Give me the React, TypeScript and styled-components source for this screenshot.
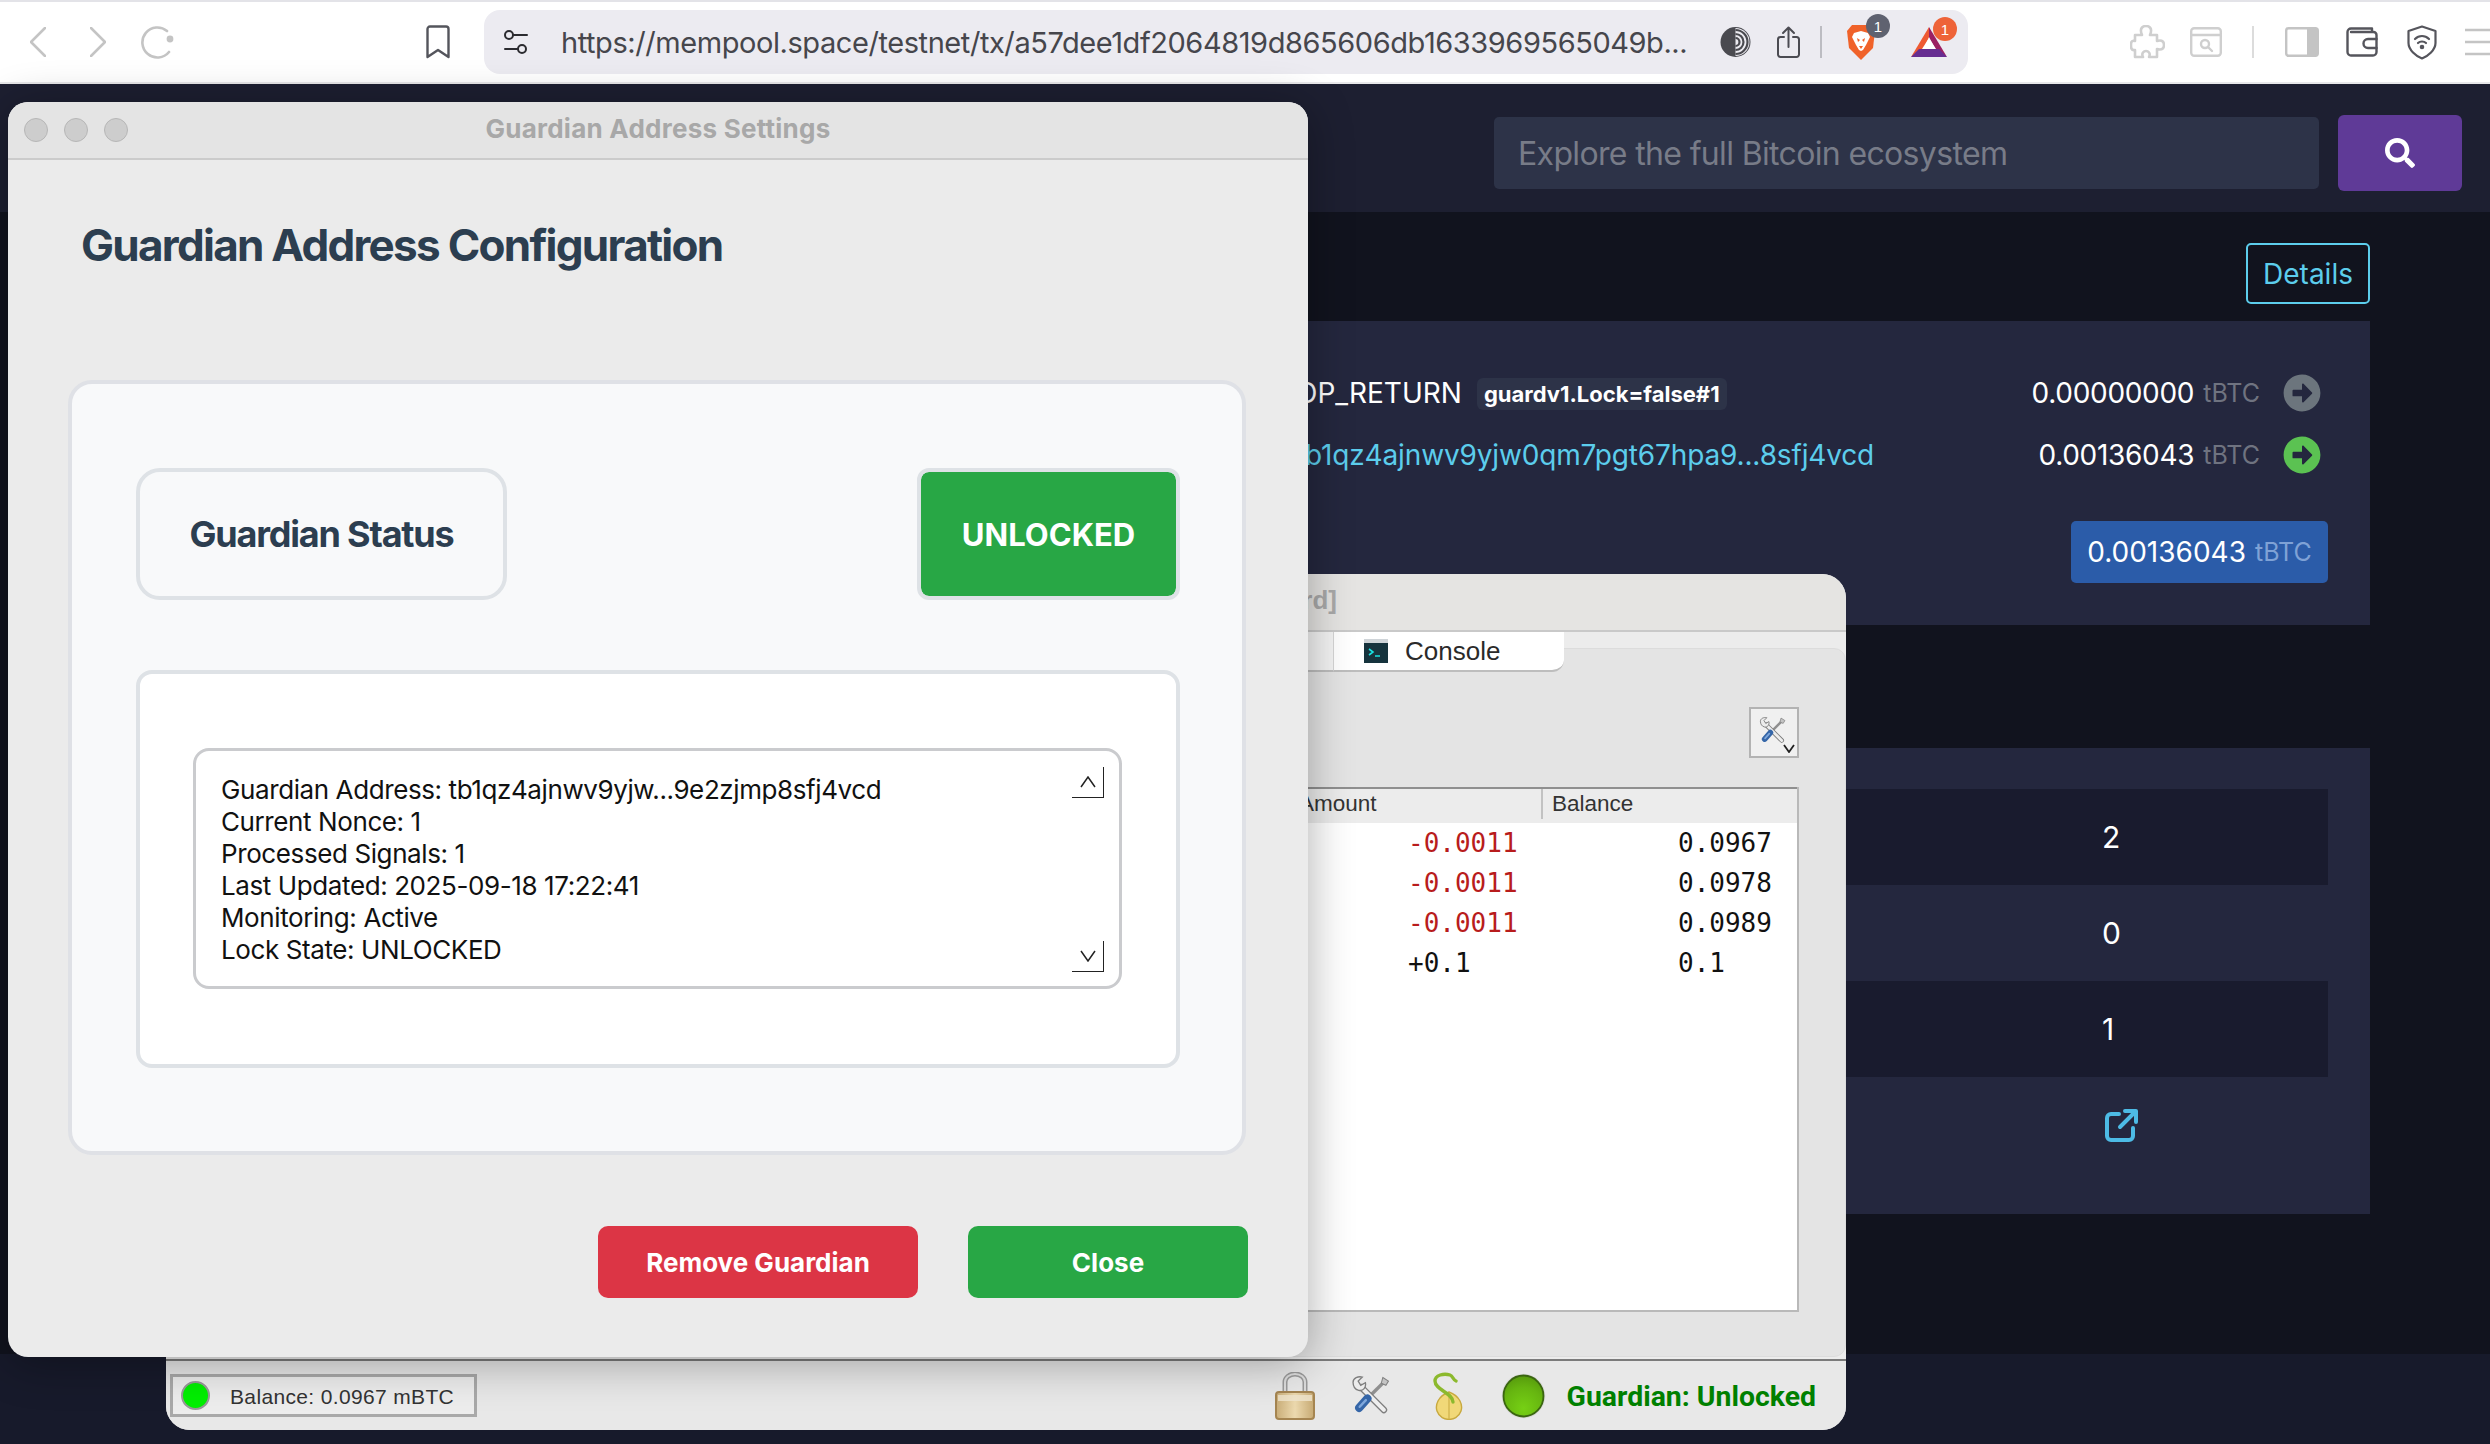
import React from "react";
import styled, { createGlobalStyle } from "styled-components";
import { FaArrowAltCircleRight, FaSearch } from "react-icons/fa";

const Global = createGlobalStyle`
  html, body { margin: 0; padding: 0; background: #11131e; }
  * { box-sizing: border-box; }
  body { font-family: Inter, "Liberation Sans", sans-serif; }
`;

const Page = styled.div`
  position: relative;
  width: 2490px;
  height: 1444px;
  overflow: hidden;
  display: flex;
  flex-direction: column;
  background: #11131e;
`;

/* ---------- browser toolbar ---------- */
const Toolbar = styled.header`
  flex: 0 0 84px;
  display: flex;
  align-items: center;
  background: #fff;
  border-top: 2px solid #e3e3e8;
  border-bottom: 2px solid #e8e8ea;
  padding-left: 30px;
`;
const NavGroup = styled.div`
  flex: 0 0 420px;
  display: flex;
  align-items: center;
  gap: 44px;
  & > :last-child { margin-left: auto; }
`;
const AddressBar = styled.div`
  flex: 0 0 1484px;
  height: 64px;
  margin-left: 34px;
  border-radius: 16px;
  background: #ecebf1;
  display: flex;
  align-items: center;
  padding-left: 20px;
`;
const Url = styled.div`
  flex: 0 0 1159px;
  min-width: 0;
  margin-left: 33px;
  font-family: Inter, sans-serif;
  font-size: 29px;
  letter-spacing: -0.43px;
  color: #46464c;
  white-space: nowrap;
`;
const IconSlot = styled.div<{ $gap?: number }>`
  position: relative;
  display: flex;
  align-items: center;
  margin-left: ${(p) => p.$gap ?? 0}px;
  flex: none;
`;
const CountBadge = styled.span<{ $bg: string; $right: number }>`
  position: absolute;
  top: -10px;
  right: ${(p) => p.$right}px;
  width: 24px;
  height: 24px;
  border-radius: 50%;
  background: ${(p) => p.$bg};
  color: #fff;
  font: 15px "Liberation Sans", sans-serif;
  display: flex;
  align-items: center;
  justify-content: center;
`;
const BarRule = styled.div<{ $gap: number; $color: string }>`
  flex: none;
  width: 2px;
  height: 32px;
  margin-left: ${(p) => p.$gap}px;
  background: ${(p) => p.$color};
`;

/* ---------- mempool page ---------- */
const SiteHeader = styled.div`
  flex: 0 0 128px;
  background: #1d1f31;
  display: flex;
  align-items: center;
  justify-content: flex-end;
  gap: 19px;
  padding: 10px 28px 0 0;
`;
const SearchInput = styled.div`
  width: 825px;
  height: 72px;
  background: #2d3348;
  border-radius: 5px;
  display: flex;
  align-items: center;
  padding-left: 24px;
  font-family: Inter, sans-serif;
  font-size: 32px;
  letter-spacing: -0.65px;
  color: #787c88;
`;
const SearchButton = styled.div`
  width: 124px;
  height: 76px;
  background: #5f3a97;
  border-radius: 6px;
  color: #fff;
  display: flex;
  align-items: center;
  justify-content: center;
  font-size: 30px;
`;
const SiteMain = styled.main`
  flex: 1;
  display: flex;
  flex-direction: column;
  align-items: flex-end;
  padding: 31px 120px 0 0;
  color: #fff;
  font-family: Inter, sans-serif;
`;
const DetailsButton = styled.div`
  width: 124px;
  height: 61px;
  border: 2px solid #5ccdec;
  border-radius: 5px;
  color: #5ccdec;
  font-size: 28px;
  display: flex;
  align-items: center;
  justify-content: center;
`;
const TxPanel = styled.section`
  width: 2250px;
  height: 304px;
  margin-top: 17px;
  background: #24273e;
  padding: 41px 42px 0 1176px;
  display: flex;
  flex-direction: column;
`;
const OutputRow = styled.div`
  height: 62px;
  display: flex;
  align-items: center;
  padding-right: 7px;
  font-size: 28px;
`;
const ScriptBadge = styled.span`
  margin: 2px 0 0 15px;
  height: 32px;
  padding: 0 7px;
  border-radius: 6px;
  background: #2d3348;
  font-size: 22px;
  font-weight: 700;
  display: flex;
  align-items: center;
`;
const AddressLink = styled.span`
  color: #5ccdec;
  font-size: 28px;
  letter-spacing: -0.15px;
`;
const AmountGroup = styled.span`
  margin-left: auto;
  display: flex;
  align-items: center;
  gap: 9px;
  letter-spacing: -0.3px;
`;
const Unit = styled.span<{ $color?: string }>`
  color: ${(p) => p.$color ?? "#6f7380"};
  font-size: 25px;
  letter-spacing: 0;
`;
const ArrowCircle = styled(FaArrowAltCircleRight)<{ $color: string }>`
  width: 38px;
  height: 38px;
  margin-left: 23px;
  color: ${(p) => p.$color};
`;
const TotalPill = styled.div`
  align-self: flex-end;
  width: 257px;
  height: 62px;
  margin-top: 35px;
  background: #2b5ca9;
  border-radius: 5px;
  display: flex;
  align-items: center;
  justify-content: center;
  gap: 9px;
  font-size: 28px;
`;
const StatsPanel = styled.section`
  width: 2250px;
  height: 466px;
  margin-top: 123px;
  background: #24273e;
  padding: 41px 42px 0 0;
  font-size: 30px;
`;
const StatRow = styled.div<{ $dark?: boolean }>`
  height: 96px;
  background: ${(p) => (p.$dark ? "#191b2e" : "transparent")};
  padding-left: 1982px;
  display: flex;
  align-items: center;
`;
const ExternalIcon = styled.svg`
  width: 34px;
  height: 34px;
  margin-left: 3px;
`;
const SiteFooter = styled.div`
  flex: 0 0 90px;
  background: #171a2b;
`;

/* ---------- wallet window (behind) ---------- */
const WalletWindow = styled.div`
  position: absolute;
  z-index: 1;
  left: 166px;
  top: 574px;
  width: 1680px;
  height: 856px;
  border-radius: 24px;
  overflow: hidden;
  background: #ececec;
  display: flex;
  flex-direction: column;
  font-family: "Liberation Sans", sans-serif;
`;
const WalletTitle = styled.div`
  flex: 0 0 58px;
  background: #e5e4e2;
  border-bottom: 2px solid #c9c9c9;
  display: flex;
  align-items: center;
  justify-content: flex-end;
  padding: 0 509px 4px 0;
  font-weight: 700;
  font-size: 26px;
  color: #a9a9a9;
`;
const TabStrip = styled.div`
  flex: 0 0 40px;
  display: flex;
  position: relative;
  z-index: 1;
  padding-left: 30px;
`;
const TabFill = styled.div`
  flex: 0 0 1138px;
  height: 40px;
  background: #f4f4f4;
  border-bottom: 2px solid #bdbdbd;
  border-right: 1px solid #d5d5d5;
`;
const Tab = styled.div`
  flex: 0 0 230px;
  height: 40px;
  background: #fff;
  border-bottom: 2px solid #bdbdbd;
  border-radius: 0 0 12px 0;
  display: flex;
  align-items: center;
  padding-left: 30px;
  gap: 17px;
  font-size: 26px;
  color: #2a2a2a;
`;
const Pane = styled.div`
  flex: 0 0 709px;
  margin-top: -24px;
  background: #e4e4e4;
  border: 1px solid #dcdcdc;
  border-radius: 12px;
  padding: 58px 46px 44px 30px;
  display: flex;
  flex-direction: column;
  align-items: flex-end;
`;
const ToolButton = styled.div`
  position: relative;
  width: 50px;
  height: 51px;
  background: #f0f0f0;
  border: 2px solid #b3b3b3;
  display: flex;
  align-items: center;
  padding: 0 0 4px 8px;
`;
const Chevron = styled.svg`
  position: absolute;
  right: 2px;
  bottom: 3px;
  width: 12px;
  height: 9px;
`;
const LedgerTable = styled.div`
  width: 100%;
  margin-top: 29px;
  flex: 1;
  background: #fff;
  border-right: 2px solid #b9b9b9;
  border-bottom: 2px solid #b9b9b9;
`;
const LedgerHead = styled.div`
  display: grid;
  grid-template-columns: 1101px 243px 1fr;
  height: 36px;
  background: #ececec;
  border-top: 2px solid #8f8f8f;
  align-items: start;
  font-size: 22.5px;
  color: #333;
`;
const HeadCell = styled.div<{ $rule?: boolean }>`
  padding-left: ${(p) => (p.$rule ? 9 : 1)}px;
  height: 30px;
  line-height: 30px;
  border-left: ${(p) => (p.$rule ? "2px solid #c2c2c2" : "none")};
`;
const LedgerRow = styled.div`
  display: grid;
  grid-template-columns: 1101px 243px 1fr;
  height: 40px;
  align-items: center;
  font-family: "DejaVu Sans Mono", monospace;
  font-size: 26px;
  color: #111;
`;
const AmountCell = styled.div<{ $negative?: boolean }>`
  padding-left: 110px;
  color: ${(p) => (p.$negative ? "#b81c1c" : "#111")};
`;
const BalanceCell = styled.div`
  padding-left: 137px;
`;
const Rule = styled.div`
  flex: 0 0 2px;
  margin-top: 2px;
  background: #7b7b7b;
`;
const StatusBar = styled.div`
  flex: 1;
  display: flex;
  align-items: center;
  padding: 0 30px 0 4px;
  background: #e8e8e8;
`;
const BalanceBox = styled.div`
  width: 307px;
  height: 43px;
  border: 3px solid #a9a9a9;
  background: #ededed;
  display: flex;
  align-items: center;
  padding: 2px 0 0 8px;
  font-size: 21px;
  letter-spacing: 0.35px;
  color: #333;
`;
const BalanceDot = styled.span`
  width: 29px;
  height: 29px;
  margin-top: -2px;
  border-radius: 50%;
  background: #00f000;
  border: 2px solid #999;
  margin-right: 20px;
`;
const GuardianLabel = styled.div`
  margin-left: 21px;
  padding-top: 2px;
  font-family: Roboto, sans-serif;
  font-weight: 700;
  font-size: 28.4px;
  color: #008000;
  white-space: nowrap;
`;
const StatusSpacer = styled.div`
  flex: 1;
`;

/* ---------- guardian dialog ---------- */
const Dialog = styled.div`
  position: absolute;
  z-index: 2;
  left: 8px;
  top: 102px;
  width: 1300px;
  height: 1255px;
  background: #ebebeb;
  border-radius: 20px;
  overflow: hidden;
  box-shadow: 0 6px 46px rgba(0, 0, 0, 0.32);
  display: flex;
  flex-direction: column;
  font-family: Inter, sans-serif;
`;
const TitleBar = styled.div`
  position: relative;
  flex: 0 0 58px;
  background: #e4e4e4;
  border-bottom: 2px solid #cbcbcb;
  padding-bottom: 4px;
  display: flex;
  align-items: center;
  justify-content: center;
  font-size: 26px;
  font-weight: 700;
  letter-spacing: 0.25px;
  color: #a8a8a8;
`;
const Lights = styled.div`
  position: absolute;
  left: 16px;
  top: 16px;
  display: flex;
  gap: 16px;
`;
const Light = styled.span`
  width: 24px;
  height: 24px;
  border-radius: 50%;
  background: #cdcdcd;
  border: 1px solid #b6b6b6;
`;
const Heading = styled.h1`
  margin: 55px 0 105px 73px;
  font-size: 44px;
  line-height: 60px;
  font-weight: 700;
  letter-spacing: -1.72px;
  color: #2c3e50;
`;
const OuterCard = styled.div`
  margin: 0 62px 0 60px;
  background: #f8f9fa;
  border: 4px solid #dfe1e6;
  border-radius: 24px;
  padding: 84px 62px 83px 64px;
`;
const StatusRow = styled.div`
  display: flex;
  justify-content: space-between;
  height: 132px;
`;
const StatusLabel = styled.div`
  width: 371px;
  border: 4px solid #dee2e6;
  border-radius: 24px;
  display: flex;
  align-items: center;
  justify-content: center;
  font-size: 36px;
  font-weight: 700;
  letter-spacing: -1.2px;
  color: #2c3e50;
`;
const StatusState = styled.div`
  width: 263px;
  border: 4px solid #dee2e6;
  border-radius: 12px;
  background: #28a745;
  background-clip: padding-box;
  display: flex;
  align-items: center;
  justify-content: center;
  font-size: 31px;
  font-weight: 700;
  color: #fff;
`;
const InnerCard = styled.div`
  margin-top: 70px;
  background: #fff;
  border: 4px solid #dee2e6;
  border-radius: 16px;
  padding: 74px 54px 75px 53px;
`;
const InfoBox = styled.div`
  height: 241px;
  border: 3px solid #cacbce;
  border-radius: 16px;
  display: flex;
  padding: 16px 15px 14px 25px;
`;
const InfoText = styled.div`
  flex: 1;
  padding-top: 7px;
  font-size: 26px;
  line-height: 32px;
  color: #111;
  white-space: pre-line;
  letter-spacing: -0.4px;
`;
const ScrollColumn = styled.div`
  flex: 0 0 32px;
  display: flex;
  flex-direction: column;
  justify-content: space-between;
`;
const ScrollArrow = styled.div`
  height: 31px;
  border-right: 1.5px solid #222;
  border-bottom: 1.5px solid #222;
  display: flex;
  align-items: center;
  justify-content: center;
`;
const ButtonRow = styled.div`
  margin: 71px 60px 0 0;
  display: flex;
  justify-content: flex-end;
  gap: 50px;
`;
const ActionButton = styled.div<{ $bg: string; $width: number }>`
  width: ${(p) => p.$width}px;
  height: 72px;
  background: ${(p) => p.$bg};
  border-radius: 10px;
  color: #fff;
  font-size: 26px;
  font-weight: 700;
  display: flex;
  align-items: center;
  justify-content: center;
`;

/* ---------- drawings ---------- */
const line = { fill: "none", strokeLinecap: "round", strokeLinejoin: "round" } as const;

const ToolsIcon = ({ size = 38 }: { size?: number }) => (
  <svg width={size} height={size} viewBox="0 0 38 38">
    <path d="M33 5 L15 23" stroke="#8f8f8f" strokeWidth="3.4" />
    <path d="M31 1.500 L36.500 5 L34 9 L29.500 7 Z" fill="#c4c4c4" stroke="#808080" strokeWidth="1" />
    <path d="M10 11 L32 33" stroke="#7e7e7e" strokeWidth="6.500" strokeLinecap="round" />
    <path d="M10 11 L32 33" stroke="#eeeeee" strokeWidth="4" strokeLinecap="round" />
    <path d="M2 6 C2 2 7 0 11 1 L7 5 L9.500 9 L14 6.500 C15 11 12 15 7.500 14 C4 13 2 10 2 6 Z" fill="#ececec" stroke="#7e7e7e" strokeWidth="1.300" />
    <path d="M16 22 L8 31" stroke="#3566a8" strokeWidth="8" strokeLinecap="round" />
    <path d="M14.500 23.500 L8.500 30" stroke="#7fa8dc" strokeWidth="2.400" strokeLinecap="round" />
  </svg>
);

const App = () => (
  <Page>
    <Global />
    <Toolbar>
      <NavGroup>
        <svg width="16" height="30" viewBox="0 0 16 30" {...line} stroke="#c4c4c4" strokeWidth="2.6"><path d="M15 1 L1 15 L15 29" /></svg>
        <svg width="16" height="30" viewBox="0 0 16 30" {...line} stroke="#c4c4c4" strokeWidth="2.6"><path d="M1 1 L15 15 L1 29" /></svg>
        <IconSlot $gap={-9}>
          <svg width="34" height="34" viewBox="0 0 34 34" {...line} stroke="#c4c4c4" strokeWidth="2.6">
            <path d="M26 6 A15 15 0 1 0 28 27" />
            <circle cx="29" cy="14" r="3.4" fill="#c4c4c4" stroke="none" />
          </svg>
        </IconSlot>
        <svg width="24" height="34" viewBox="0 0 24 34" {...line} stroke="#54555c" strokeWidth="2.4"><path d="M4 1.5 H20 A2.5 2.5 0 0 1 22.5 4 V32 L12 25 L1.5 32 V4 A2.5 2.5 0 0 1 4 1.5 Z" /></svg>
      </NavGroup>
      <AddressBar>
        <svg width="24" height="24" viewBox="0 0 24 24" {...line} stroke="#2b2b30" strokeWidth="2">
          <circle cx="5" cy="5" r="4" /><path d="M9 5 H23" /><circle cx="18" cy="19" r="4" /><path d="M1 19 H14" />
        </svg>
        <Url>https://mempool.space/testnet/tx/a57dee1df2064819d865606db1633969565049b...</Url>
        <IconSlot>
          <svg width="31" height="30" viewBox="0 0 31 30">
            <circle cx="15.5" cy="15" r="15" fill="#4a4a50" />
            <path d="M15.5 1 A14 14 0 0 1 15.5 29" fill="#ecebf1" />
            <path d="M15.5 3 A12 12 0 0 1 15.5 27 M15.5 7 A8 8 0 0 1 15.5 23 M15.5 11 A4 4 0 0 1 15.5 19" fill="none" stroke="#4a4a50" strokeWidth="2.2" />
          </svg>
        </IconSlot>
        <IconSlot $gap={26}>
          <svg width="23" height="32" viewBox="0 0 23 32" {...line} stroke="#4b4b52" strokeWidth="2">
            <path d="M7 11 H3.5 A2.5 2.5 0 0 0 1 13.5 V28.5 A2.5 2.5 0 0 0 3.5 31 H19.5 A2.5 2.5 0 0 0 22 28.5 V13.5 A2.5 2.5 0 0 0 19.5 11 H16" />
            <path d="M11.5 21 V2 M6 7 L11.5 1.5 L17 7" />
          </svg>
        </IconSlot>
        <BarRule $gap={20} $color="#bcbcc2" />
        <IconSlot $gap={24}>
          <svg width="30" height="36" viewBox="0 0 30 36">
            <path d="M6 1 H24 L29 7 L27 24 L15 36 L3 24 L1 7 Z" fill="#f0622a" />
            <path d="M8 9 L15 7 L22 9 L24 13 L20 21 L17 26 L15 27 L13 26 L10 21 L6 13 Z" fill="#fff" />
            <path d="M11 14 L14 16 L12 18 Z M19 14 L16 16 L18 18 Z M13 22 H17 L15 25 Z" fill="#f0622a" />
          </svg>
          <CountBadge $bg="#5f6270" $right={-14}>1</CountBadge>
        </IconSlot>
        <IconSlot $gap={35}>
          <svg width="36" height="30" viewBox="0 0 36 30">
            <path d="M18 0 L0 30 L12 23 L18 10 Z" fill="#ee5a33" />
            <path d="M18 0 L36 30 L25 23 L18 10 Z" fill="#9b1f63" />
            <path d="M0 30 H36 L28 22 H8 Z" fill="#662d91" />
            <path d="M18 11 L25 22 H11 Z" fill="#ffffff" />
          </svg>
          <CountBadge $bg="#ee6338" $right={-10}>1</CountBadge>
        </IconSlot>
      </AddressBar>
      <IconSlot $gap={162}>
        <svg width="35" height="34" viewBox="0 0 35 34" {...line} stroke="#cfcfcf" strokeWidth="2.6">
          <path d="M5 10 H12 C9 3 13 1 16 1 C19 1 23 3 20 10 H27 V16 C33 14 34 18 34 20 C34 22 33 26 27 24 V32 H19 C21 28 18 26 16 26 C14 26 11 28 13 32 H5 V25 C1 26 1 22 1 20 C1 18 1 15 5 16 Z" />
        </svg>
      </IconSlot>
      <IconSlot $gap={25}>
        <svg width="32" height="30" viewBox="0 0 32 30" {...line} stroke="#cfcfcf" strokeWidth="2.4">
          <rect x="1.2" y="1.2" width="29.6" height="27.6" rx="3" /><path d="M1.2 8 H30.8" /><circle cx="15" cy="17" r="4" /><path d="M18 20 L22 24" />
        </svg>
      </IconSlot>
      <BarRule $gap={30} $color="#dcdcdc" />
      <IconSlot $gap={31}>
        <svg width="34" height="30" viewBox="0 0 34 30">
          <rect x="1.2" y="1.2" width="31.6" height="27.6" rx="2.5" fill="#fff" stroke="#c4c4c4" strokeWidth="2.4" />
          <rect x="22" y="1.2" width="11" height="27.6" fill="#c4c4c4" />
        </svg>
      </IconSlot>
      <IconSlot $gap={27}>
        <svg width="32" height="30" viewBox="0 0 32 30" {...line} stroke="#55555c" strokeWidth="2.4">
          <path d="M5 5 H26 V1.5 H5 A3.5 3.5 0 0 0 1.5 5 V25 A3.5 3.5 0 0 0 5 28.5 H27 A3.5 3.5 0 0 0 30.5 25 V8 A3 3 0 0 0 27.5 5" />
          <path d="M30.5 12 H22 A3.5 3.5 0 0 0 22 21 H30.5" />
        </svg>
      </IconSlot>
      <IconSlot $gap={29}>
        <svg width="30" height="35" viewBox="0 0 30 35" {...line} stroke="#55555c" strokeWidth="2.2">
          <path d="M15 1.5 L28.5 6 V18 C28.5 25 21 31 15 33.5 C9 31 1.500 25 1.500 18 V6 Z" />
          <path d="M8 14 C12 10 18 10 22 14 M11 18 C13 16 17 16 19 18" /><circle cx="15" cy="22" r="1.200" fill="#55555c" />
        </svg>
      </IconSlot>
      <IconSlot $gap={28}>
        <svg width="25" height="28" viewBox="0 0 25 28" stroke="#c4c4c4" strokeWidth="2.4"><path d="M0 2 H25 M0 14 H25 M0 26 H25" /></svg>
      </IconSlot>
    </Toolbar>

    <SiteHeader>
      <SearchInput>Explore the full Bitcoin ecosystem</SearchInput>
      <SearchButton><FaSearch /></SearchButton>
    </SiteHeader>

    <SiteMain>
      <DetailsButton>Details</DetailsButton>
      <TxPanel>
        <OutputRow>
          <span>OP_RETURN</span>
          <ScriptBadge>guardv1.Lock=false#1</ScriptBadge>
          <AmountGroup>0.00000000 <Unit>tBTC</Unit></AmountGroup>
          <ArrowCircle $color="#6c757d" />
        </OutputRow>
        <OutputRow>
          <AddressLink>tb1qz4ajnwv9yjw0qm7pgt67hpa9...8sfj4vcd</AddressLink>
          <AmountGroup>0.00136043 <Unit>tBTC</Unit></AmountGroup>
          <ArrowCircle $color="#5bc252" />
        </OutputRow>
        <TotalPill>0.00136043 <Unit $color="#7fa2d6">tBTC</Unit></TotalPill>
      </TxPanel>
      <StatsPanel>
        <StatRow $dark>2</StatRow>
        <StatRow>0</StatRow>
        <StatRow $dark>1</StatRow>
        <StatRow>
          <ExternalIcon viewBox="0 0 34 34" {...line} stroke="#4dbbe5" strokeWidth="4">
            <path d="M14 6 H6 A4 4 0 0 0 2 10 V28 A4 4 0 0 0 6 32 H24 A4 4 0 0 0 28 28 V20" />
            <path d="M15 19 L30 4 M20 3 H31 V14" />
          </ExternalIcon>
        </StatRow>
      </StatsPanel>
    </SiteMain>
    <SiteFooter />

    <WalletWindow>
      <WalletTitle>Electrum Testnet 4.6.2 - wallet_1 [standard]</WalletTitle>
      <TabStrip>
        <TabFill />
        <Tab>
          <svg width="24" height="24" viewBox="0 0 24 24">
            <rect width="24" height="24" fill="#cfd4d8" />
            <rect y="4" width="24" height="20" fill="#16333d" />
            <path d="M5 10 L9 13 L5 16 M11 17 H16" fill="none" stroke="#19e0e0" strokeWidth="1.600" />
          </svg>
          Console
        </Tab>
      </TabStrip>
      <Pane>
        <ToolButton>
          <ToolsIcon size={27} />
          <Chevron viewBox="0 0 12 9" fill="none" stroke="#222" strokeWidth="1.800"><path d="M1 1 L6 8 L11 1" /></Chevron>
        </ToolButton>
        <LedgerTable>
          <LedgerHead>
            <HeadCell />
            <HeadCell>Amount</HeadCell>
            <HeadCell $rule>Balance</HeadCell>
          </LedgerHead>
          <LedgerRow><span /><AmountCell $negative>-0.0011</AmountCell><BalanceCell>0.0967</BalanceCell></LedgerRow>
          <LedgerRow><span /><AmountCell $negative>-0.0011</AmountCell><BalanceCell>0.0978</BalanceCell></LedgerRow>
          <LedgerRow><span /><AmountCell $negative>-0.0011</AmountCell><BalanceCell>0.0989</BalanceCell></LedgerRow>
          <LedgerRow><span /><AmountCell>+0.1</AmountCell><BalanceCell>0.1</BalanceCell></LedgerRow>
        </LedgerTable>
      </Pane>
      <Rule />
      <StatusBar>
        <BalanceBox><BalanceDot />Balance: 0.0967 mBTC</BalanceBox>
        <StatusSpacer />
        <svg width="40" height="48" viewBox="0 0 40 48">
          <defs>
            <linearGradient id="brass" x1="0" x2="1" y1="0" y2="0">
              <stop offset="0" stopColor="#c9ad78" /><stop offset="0.5" stopColor="#ecd9ae" /><stop offset="1" stopColor="#c6a973" />
            </linearGradient>
          </defs>
          <path d="M10 22 V10 A10 8 0 0 1 30 10 V24" fill="none" stroke="#9a9a9a" strokeWidth="5" />
          <path d="M10 22 V10 A10 8 0 0 1 30 10 V24" fill="none" stroke="#dcdcdc" strokeWidth="2" />
          <rect x="1" y="20" width="38" height="27" rx="3" fill="url(#brass)" stroke="#a58551" strokeWidth="2" />
          <rect x="3" y="23" width="34" height="6" fill="#f0e6cf" opacity="0.8" />
        </svg>
        <IconSlot $gap={36}><ToolsIcon size={39} /></IconSlot>
        <IconSlot $gap={42}>
          <svg width="32" height="48" viewBox="0 0 32 48">
            <path d="M17 20 C6 24 3 33 5 39 C7 45 13 48 17 47 C21 48 27 45 29 39 C31 33 28 24 17 20 Z" fill="#f1d878" stroke="#c8a93f" strokeWidth="1.400" />
            <path d="M17 24 V46" stroke="#c8a93f" strokeWidth="1" />
            <path d="M21 30 C21 21 3 18 3 9 C3 3 12 1 18 3 C21 4 21 8 24 9" fill="none" stroke="#8cb92d" strokeWidth="3.400" strokeLinecap="round" />
          </svg>
        </IconSlot>
        <IconSlot $gap={37}>
          <svg width="45" height="46" viewBox="0 0 45 46">
            <defs>
              <radialGradient id="orb" cx="0.5" cy="0.8" r="0.85">
                <stop offset="0" stopColor="#76d014" /><stop offset="0.6" stopColor="#66b510" /><stop offset="1" stopColor="#54960c" />
              </radialGradient>
            </defs>
            <ellipse cx="22.500" cy="23" rx="21.800" ry="22.300" fill="#d8d8d8" />
            <ellipse cx="22.500" cy="23" rx="20" ry="20.500" fill="url(#orb)" stroke="#3a6510" strokeWidth="1.800" />
          </svg>
        </IconSlot>
        <GuardianLabel>Guardian: Unlocked</GuardianLabel>
      </StatusBar>
    </WalletWindow>

    <Dialog>
      <TitleBar>
        <Lights><Light /><Light /><Light /></Lights>
        Guardian Address Settings
      </TitleBar>
      <Heading>Guardian Address Configuration</Heading>
      <OuterCard>
        <StatusRow>
          <StatusLabel>Guardian Status</StatusLabel>
          <StatusState>UNLOCKED</StatusState>
        </StatusRow>
        <InnerCard>
          <InfoBox>
            <InfoText>{`Guardian Address: tb1qz4ajnwv9yjw...9e2zjmp8sfj4vcd
Current Nonce: 1
Processed Signals: 1
Last Updated: 2025-09-18 17:22:41
Monitoring: Active
Lock State: UNLOCKED`}</InfoText>
            <ScrollColumn>
              <ScrollArrow>
                <svg width="16" height="12" viewBox="0 0 16 12" fill="none" stroke="#222" strokeWidth="1.500"><path d="M1 11 L8 1 L15 11" /></svg>
              </ScrollArrow>
              <ScrollArrow>
                <svg width="16" height="12" viewBox="0 0 16 12" fill="none" stroke="#222" strokeWidth="1.500"><path d="M1 1 L8 11 L15 1" /></svg>
              </ScrollArrow>
            </ScrollColumn>
          </InfoBox>
        </InnerCard>
      </OuterCard>
      <ButtonRow>
        <ActionButton $bg="#dc3545" $width={320}>Remove Guardian</ActionButton>
        <ActionButton $bg="#28a745" $width={280}>Close</ActionButton>
      </ButtonRow>
    </Dialog>
  </Page>
);

export default App;
